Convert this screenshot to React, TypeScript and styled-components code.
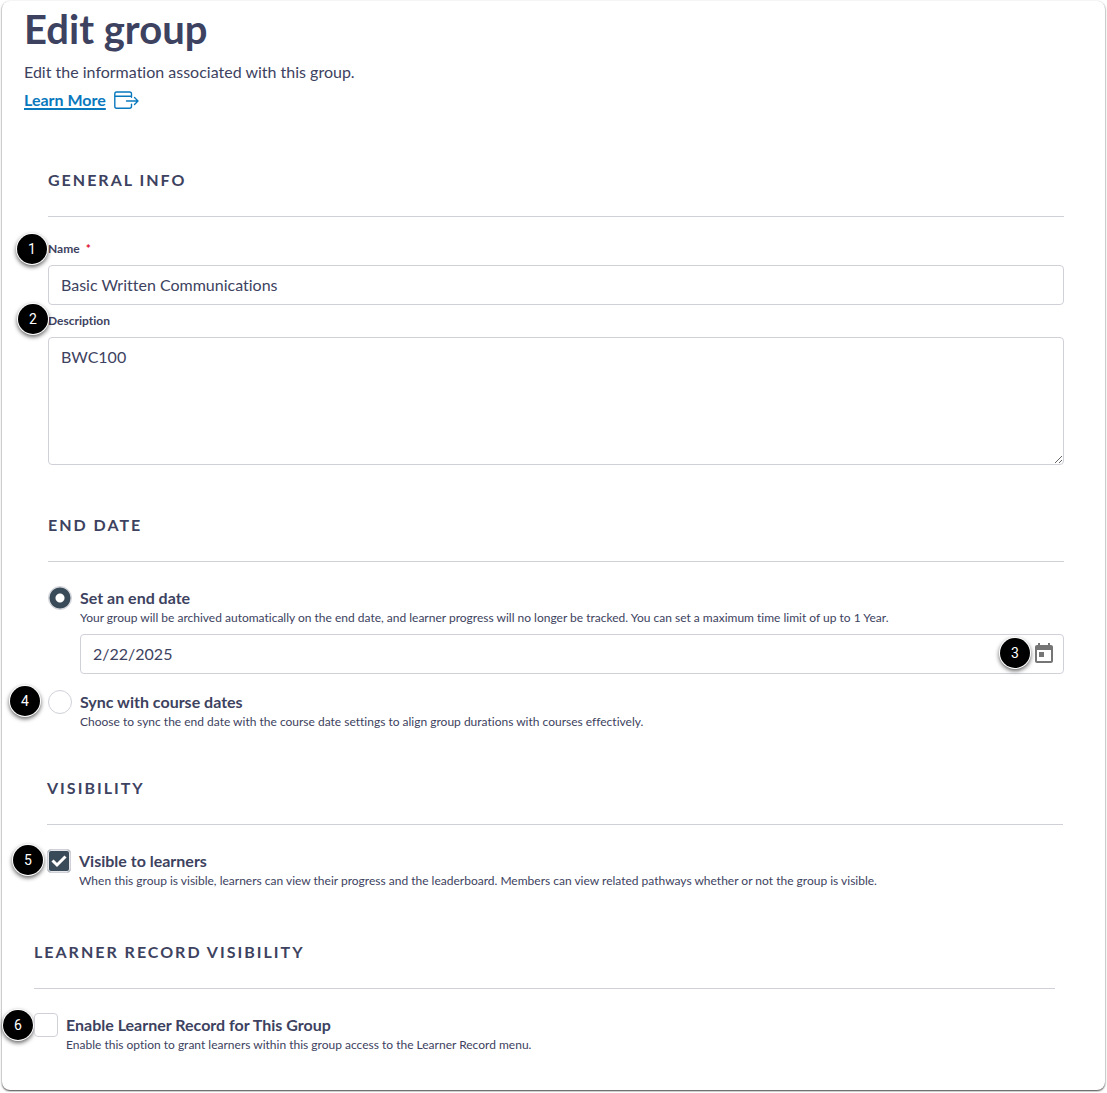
import React, { useState } from "react";
import styled, { createGlobalStyle } from "styled-components";

const ink = "#3d4260";
const slate = "#394b58";
const line = "#d0d1d8";

const GlobalStyle = createGlobalStyle`
  *, *::before, *::after { box-sizing: border-box; }
  body {
    margin: 0;
    background: #fff;
    color: ${ink};
    font-family: Lato, "Open Sans", sans-serif;
    font-size: 16px;
    line-height: 24px;
    font-variant-ligatures: none;
  }
`;

const Card = styled.main`
  margin: 1px 2px 2px;
  padding: 4px 24px 37px 22px;
  border-radius: 8px;
  background: #fff;
  box-shadow: 0 1px 2px rgba(0, 0, 0, 0.75);
`;

const Header = styled.header`
  display: flex;
  flex-direction: column;
  align-items: flex-start;
  margin-bottom: 56px;
`;

const Title = styled.h1`
  margin: 0 0 7px;
  font-size: 40px;
  line-height: 48px;
  font-weight: 700;
`;

const Intro = styled.p`
  margin: 0 0 4px;
`;

const LearnMore = styled.a`
  display: inline-flex;
  align-items: center;
  gap: 8px;
  color: #0a78bd;
  font-weight: 700;
  text-decoration: none;

  span {
    text-decoration: underline;
    text-decoration-thickness: 2px;
    text-underline-offset: 2px;
  }
`;

const Section = styled.section<{ $start?: number; $end?: number; $before?: number }>`
  margin-top: ${(p) => p.$before ?? 0}px;
  padding-left: ${(p) => p.$start ?? 24}px;
  padding-right: ${(p) => p.$end ?? 17}px;
`;

const SectionTitle = styled.h2`
  margin: 0 0 24px;
  padding-bottom: 24px;
  border-bottom: 1px solid ${line};
  font-size: 16px;
  line-height: 24px;
  font-weight: 700;
  letter-spacing: 2px;
  text-transform: uppercase;
`;

const Field = styled.div`
  position: relative;
  display: flex;
  flex-direction: column;
  gap: 8px;

  & + & {
    margin-top: 8px;
  }
`;

const FieldLabel = styled.label`
  font-size: 12px;
  line-height: 16px;
  font-weight: 700;
`;

const Required = styled.span`
  margin-left: 6px;
  color: #e0061f;
`;

const TextInput = styled.input`
  display: block;
  width: 100%;
  height: 40px;
  padding: 0 12px 2px;
  border: 1px solid ${line};
  border-radius: 4px;
  background: #fff;
  color: inherit;
  font: inherit;
  font-variant-ligatures: none;
`;

const TextArea = styled.textarea`
  display: block;
  width: 100%;
  height: 128px;
  padding: 7px 12px;
  border: 1px solid ${line};
  border-radius: 4px;
  background: #fff;
  color: inherit;
  font: inherit;
  font-variant-ligatures: none;
  resize: vertical;
`;

const Option = styled.div`
  position: relative;
  display: grid;
  grid-template-columns: 24px 1fr;
  column-gap: 8px;

  & + & {
    margin-top: 16px;
  }
`;

const OptionLabel = styled.label`
  font-weight: 700;
`;

const Hint = styled.p`
  grid-column: 2;
  margin: 0;
  font-size: 12px;
  line-height: 16px;
`;

const Radio = styled.input.attrs({ type: "radio" })`
  appearance: none;
  width: 24px;
  height: 24px;
  margin: 0;
  border: 1px solid ${line};
  border-radius: 50%;
  background: #fff;

  &:checked {
    background: radial-gradient(circle, #fff 4px, ${slate} 5px, ${slate} 10px, #e4e6ea 11px);
  }
`;

const CheckMark = styled.span`
  position: relative;
  display: block;
  width: 24px;
  height: 24px;

  svg {
    position: absolute;
    inset: 0;
    pointer-events: none;
  }
`;

const CheckInput = styled.input.attrs({ type: "checkbox" })`
  appearance: none;
  display: block;
  width: 24px;
  height: 24px;
  margin: 0;
  border: 1px solid ${line};
  border-radius: 4px;
  background: #fff;

  &:checked {
    background: ${slate};
    box-shadow: inset 0 0 0 1px #e4e6ea;
  }
`;

const DateField = styled.div`
  grid-column: 2;
  position: relative;
  margin-top: 8px;
`;

const CalendarButton = styled.button`
  position: absolute;
  top: 8px;
  right: 8px;
  width: 24px;
  height: 24px;
  padding: 0;
  border: 0;
  background: none;
  color: #757575;
`;

const Badge = styled.span<{ $left?: number; $right?: number; $top: number }>`
  position: absolute;
  top: ${(p) => p.$top}px;
  ${(p) => (p.$right !== undefined ? `right: ${p.$right}px;` : `left: ${p.$left}px;`)}
  display: flex;
  align-items: center;
  justify-content: center;
  width: 30px;
  height: 30px;
  border-radius: 50%;
  background: #000;
  color: #fff;
  box-shadow: 0 0 0 1px #fff, 0 2px 4px 1px rgba(0, 0, 0, 0.6);
  font-family: Roboto, "Open Sans", sans-serif;
  font-size: 14px;
  line-height: 16px;
  font-weight: 400;
`;

const ExternalIcon = () => (
  <svg width="25" height="20" viewBox="0 0 25 20" fill="none" stroke="currentColor" strokeWidth="1.4" strokeLinecap="round" strokeLinejoin="round" aria-hidden="true">
    <path d="M17.500 7.200V4q0-2-2-2H2.500q-1.700 0-1.700 2v12.200q0 2 1.700 2h13q2 0 2-2v-2M.8 6.200h16.700M12.500 11H24M20.500 7.500l3.500 3.500-3.500 3.500" />
  </svg>
);

const CalendarIcon = () => (
  <svg width="24" height="24" viewBox="0 0 24 24" fill="currentColor" aria-hidden="true">
    <path d="M19 3h-1V1h-2v2H8V1H6v2H5c-1.110 0-1.990.9-1.990 2L3 19c0 1.100.89 2 2 2h14c1.100 0 2-.9 2-2V5c0-1.100-.9-2-2-2zm0 16H5V8h14v11zM7 10h5v5H7z" />
  </svg>
);

type CheckProps = { id: string; checked: boolean; onToggle: () => void };

const Check = ({ id, checked, onToggle }: CheckProps) => (
  <CheckMark>
    <CheckInput id={id} checked={checked} onChange={onToggle} />
    {checked && (
      <svg width="24" height="24" viewBox="0 0 24 24" fill="none" stroke="#fff" strokeWidth="3" aria-hidden="true">
        <path d="M5.500 11.500l4.500 4.500L18.500 7.500" />
      </svg>
    )}
  </CheckMark>
);

export default function App() {
  const [name, setName] = useState("Basic Written Communications");
  const [description, setDescription] = useState("BWC100");
  const [endDate, setEndDate] = useState("2/22/2025");
  const [mode, setMode] = useState("fixed");
  const [visible, setVisible] = useState(true);
  const [record, setRecord] = useState(false);

  return (
    <>
      <GlobalStyle />
      <Card>
        <Header>
          <Title>Edit group</Title>
          <Intro>Edit the information associated with this group.</Intro>
          <LearnMore href="#learn-more">
            <span>Learn More</span>
            <ExternalIcon />
          </LearnMore>
        </Header>

        <Section>
          <SectionTitle>General Info</SectionTitle>
          <Field>
            <Badge $left={-31} $top={-7}>1</Badge>
            <FieldLabel htmlFor="name">
              Name<Required>*</Required>
            </FieldLabel>
            <TextInput id="name" value={name} onChange={(e) => setName(e.target.value)} />
          </Field>
          <Field>
            <Badge $left={-30} $top={-9}>2</Badge>
            <FieldLabel htmlFor="description">Description</FieldLabel>
            <TextArea id="description" value={description} onChange={(e) => setDescription(e.target.value)} />
          </Field>
        </Section>

        <Section $before={48}>
          <SectionTitle>End Date</SectionTitle>
          <Option>
            <Radio id="fixed" name="end" checked={mode === "fixed"} onChange={() => setMode("fixed")} />
            <OptionLabel htmlFor="fixed">Set an end date</OptionLabel>
            <Hint>
              Your group will be archived automatically on the end date, and learner progress will no longer be
              tracked. You can set a maximum time limit of up to 1 Year.
            </Hint>
            <DateField>
              <TextInput aria-label="End date" value={endDate} onChange={(e) => setEndDate(e.target.value)} />
              <CalendarButton type="button" aria-label="Open calendar">
                <CalendarIcon />
              </CalendarButton>
              <Badge $right={34} $top={4}>3</Badge>
            </DateField>
          </Option>
          <Option>
            <Badge $left={-38} $top={-4}>4</Badge>
            <Radio id="sync" name="end" checked={mode === "sync"} onChange={() => setMode("sync")} />
            <OptionLabel htmlFor="sync">Sync with course dates</OptionLabel>
            <Hint>
              Choose to sync the end date with the course date settings to align group durations with courses
              effectively.
            </Hint>
          </Option>
        </Section>

        <Section $before={46} $start={23} $end={18}>
          <SectionTitle>Visibility</SectionTitle>
          <Option>
            <Badge $left={-34} $top={-4}>5</Badge>
            <Check id="visible" checked={visible} onToggle={() => setVisible(!visible)} />
            <OptionLabel htmlFor="visible">Visible to learners</OptionLabel>
            <Hint>
              When this group is visible, learners can view their progress and the leaderboard. Members can view
              related pathways whether or not the group is visible.
            </Hint>
          </Option>
        </Section>

        <Section $before={51} $start={10} $end={26}>
          <SectionTitle>Learner Record Visibility</SectionTitle>
          <Option>
            <Badge $left={-31} $top={-3}>6</Badge>
            <Check id="record" checked={record} onToggle={() => setRecord(!record)} />
            <OptionLabel htmlFor="record">Enable Learner Record for This Group</OptionLabel>
            <Hint>Enable this option to grant learners within this group access to the Learner Record menu.</Hint>
          </Option>
        </Section>
      </Card>
    </>
  );
}
